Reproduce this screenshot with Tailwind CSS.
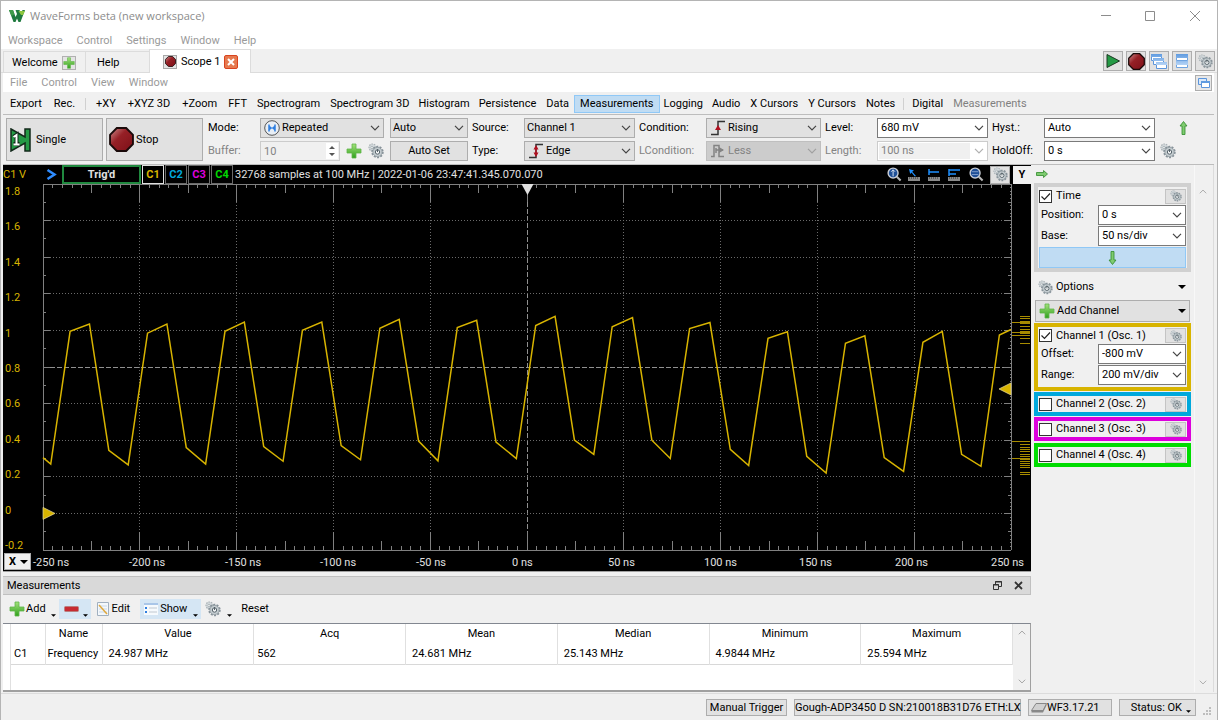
<!DOCTYPE html>
<html lang="en">
<head>
    <meta charset="UTF-8">
    <meta name="viewport" content="width=device-width, initial-scale=1.0">
    <title>WaveForms beta (new workspace)</title>
    <script src="https://cdn.jsdelivr.net/npm/@tailwindcss/browser@4"></script>
</head>
<body class="bg-[#f0f0f0] text-black text-[11px] leading-4 font-['Roboto','Liberation_Sans',sans-serif]">
    <!-- Shared icons -->
    <svg class="absolute w-0 h-0">
        <defs>
            <linearGradient id="g-red" x1="0" y1="0" x2="1" y2="1"><stop offset="0" stop-color="#cf9090"/><stop offset=".4" stop-color="#962026"/><stop offset="1" stop-color="#7d1018"/></linearGradient>
            <linearGradient id="g-green" x1="0" y1="0" x2="0" y2="1"><stop offset="0" stop-color="#a4e27c"/><stop offset="1" stop-color="#2fa01c"/></linearGradient>
            <linearGradient id="g-win" x1="0" y1="0" x2="0" y2="1"><stop offset="0" stop-color="#5f9be0"/><stop offset="1" stop-color="#b5d3f5"/></linearGradient>
        </defs>
        <symbol id="gear" viewBox="0 0 16 16">
            <circle cx="4.500" cy="4.500" r="3.500" fill="#d3d9dc" stroke="#a9b1b5" stroke-width="1.200" stroke-dasharray="1.500 1"/>
            <circle cx="4" cy="4.500" r="1.200" fill="#f4f6f7" stroke="#9aa3a8" stroke-width=".7"/>
            <circle cx="9.500" cy="9" r="5.300" fill="none" stroke="#87929a" stroke-width="1.800" stroke-dasharray="2 1.300"/>
            <circle cx="9.500" cy="9" r="4.600" fill="#c6ced2" stroke="#8a959b" stroke-width=".8"/>
            <circle cx="9.500" cy="9" r="2.200" fill="#f0f2f3" stroke="#56636a"/>
            <path d="M9.500 9V6" stroke="#56636a"/>
        </symbol>
        <symbol id="plus" viewBox="0 0 16 16">
            <path d="M6 1h4v5h5v4h-5v5H6v-5H1V6h5z" fill="url(#g-green)" stroke="#5fb54a" stroke-width=".8"/>
        </symbol>
        <symbol id="stop" viewBox="0 0 24 24">
            <path d="M7.500 1h9L23 7.500v9L16.500 23h-9L1 16.500v-9z" fill="url(#g-red)" stroke="#1a0a0a" stroke-width="1.800"/>
        </symbol>
        <symbol id="chev" viewBox="0 0 10 6"><path d="M1 .8l4 4 4-4" fill="none" stroke="currentColor" stroke-width="1.200"/></symbol>
        <symbol id="tri" viewBox="0 0 8 4"><path d="M0 0h8L4 4z" fill="currentColor"/></symbol>
        <symbol id="arrow" viewBox="0 0 8 14"><path d="M4 .5L7.500 5H5.500v8.500h-3V5H.5z" fill="#7fcb70" stroke="#2f8a2a" stroke-width=".8"/></symbol>
        <symbol id="check" viewBox="0 0 13 13"><path d="M2.500 6.500l3 3 5.500-6" fill="none" stroke="#222" stroke-width="1.200"/></symbol>
        <symbol id="lens" viewBox="0 0 16 16">
            <path d="M10.500 10.500l4 4" stroke="#b9b9b9" stroke-width="2.200"/>
            <circle cx="6.500" cy="6.500" r="5.300" fill="#1f4f96" stroke="#c9ced6" stroke-width="1.500"/>
        </symbol>
        <symbol id="ruler" viewBox="0 0 12 4"><path d="M0 0h12v4H0z" fill="#8a8a8a"/><path d="M1.500 0v2M3.500 0v2M5.500 0v2M7.500 0v2M9.500 0v2" stroke="#4a4a4a" stroke-width=".7"/></symbol>
    </svg>

    <div class="min-h-screen flex flex-col border border-[#b4b4b4]">
        <!-- Title bar -->
        <header class="bg-white">
            <div class="flex items-center h-[30px] pl-2 pr-4 text-[#8c8c8c]">
                <svg class="w-4 h-3 mr-[5px]" viewBox="0 0 16 12">
                    <path d="M0 0h4l2.500 7L8 4l-1.500-4h4l1.500 4 1.500-4H16l-4.500 12H9.500L8 8.500 6.500 12H4.500z" fill="#1f7a3f"/>
                    <path d="M9.500 1H16l-2 4h-2z" fill="#8cc63f"/>
                    <path d="M0 0h4l1.500 4.500-3 1.500z" fill="#3f9b4a"/>
                </svg>
                <h1 class="font-['Open_Sans',sans-serif]">WaveForms beta (new workspace)</h1>
                <div class="ml-auto flex items-center gap-[34px]">
                    <button aria-label="Minimize"><svg class="w-[10px] h-[10px]" viewBox="0 0 10 10"><path d="M0 4.500h10" stroke="#8c8c8c"/></svg></button>
                    <button aria-label="Maximize"><svg class="w-[10px] h-[10px]" viewBox="0 0 10 10"><path d="M.5 .5h9v9H.5z" fill="none" stroke="#8c8c8c"/></svg></button>
                    <button aria-label="Close"><svg class="w-3 h-3" viewBox="0 0 12 12"><path d="M1 1l10 10M11 1L1 11" stroke="#8c8c8c"/></svg></button>
                </div>
            </div>
            <nav class="flex items-center gap-[14px] h-[18px] pl-[7px] pt-px text-[#9a9a9a]">
                <button>Workspace</button><button>Control</button><button>Settings</button><button>Window</button><button>Help</button>
            </nav>
        </header>

        <!-- Instrument tabs -->
        <div class="flex items-end h-[24px] pl-[2px] border-b border-[#dcdcdc]">
            <button class="flex items-center gap-1 h-[21px] w-[83px] pl-2 pt-px border border-b-0 border-[#dcdcdc]">Welcome
                <span class="flex items-center justify-center size-[14px] border border-[#b0b0b0] bg-[#e4e4e4]"><svg class="size-3"><use href="#plus"/></svg></span>
            </button>
            <button class="h-[21px] w-[63px] pl-[11px] pt-px text-left border-t border-[#dcdcdc]">Help</button>
            <button class="flex items-center gap-1 h-[24px] -mb-px w-[102px] pl-[13px] bg-white border border-b-0 border-[#dcdcdc]">
                <span class="flex items-center justify-center size-[14px] border border-[#a8a8a8] bg-[#e4e4e4]"><svg class="size-[11px]"><use href="#stop"/></svg></span>
                Scope 1
                <svg class="size-[14px]" viewBox="0 0 14 14"><rect x=".5" y=".5" width="13" height="13" rx="1.500" fill="#e6794f" stroke="#d9431f"/><path d="M4 4l6 6M10 4l-6 6" stroke="#fff" stroke-width="2"/></svg>
            </button>
            <div class="ml-auto self-center flex gap-[3px] pt-px pr-[2px]">
                <button aria-label="Run all" class="flex items-center justify-center size-5 border border-[#adadad] bg-[#e1e1e1]"><svg class="size-4" viewBox="0 0 16 16"><path d="M2 1.500L14.500 8 2 14.500z" fill="#249a45" stroke="#1b3a22"/></svg></button>
                <button aria-label="Stop all" class="flex items-center justify-center size-5 border border-[#adadad] bg-[#e1e1e1]"><svg class="size-[17px]"><use href="#stop"/></svg></button>
                <button aria-label="Cascade" class="flex items-center justify-center size-5 border border-[#adadad] bg-[#e1e1e1]"><svg class="size-4" viewBox="0 0 16 16"><g fill="#fff" stroke="#5b95dc"><path d="M.5 1.500h10v6H.5z"/><path d="M2.500 5.500h10v6h-10z"/><path d="M5.500 9.500h10v6h-10z"/></g><path d="M0 1h11v3H0zM2 5h11v3H2zM5 9h11v3H5z" fill="url(#g-win)"/></svg></button>
                <button aria-label="Tile" class="flex items-center justify-center size-5 border border-[#adadad] bg-[#e1e1e1]"><svg class="size-4" viewBox="0 0 16 16"><path d="M2.500 1.500h11v6h-11zM2.500 8.500h11v6h-11z" fill="#fff" stroke="#6ea3e0"/><path d="M2 1h12v4H2zM2 8h12v4H2z" fill="url(#g-win)"/></svg></button>
                <button aria-label="Settings" class="flex items-center justify-center size-5 border border-[#adadad] bg-[#e1e1e1]"><svg class="size-[15px]"><use href="#gear"/></svg></button>
            </div>
        </div>

        <div class="flex-1 flex flex-col mx-[2px] mr-[3px]">
            <!-- Scope menu -->
            <nav class="flex items-center gap-[14px] h-[19px] pl-[7px] pr-[2px] pt-px bg-white text-[#9a9a9a]">
                <button>File</button><button>Control</button><button>View</button><button>Window</button>
                <button aria-label="Undock" class="ml-auto flex items-center justify-center w-[17px] h-4 border border-[#adadad] bg-[#e8e8e8]"><svg class="size-3" viewBox="0 0 12 12"><path d="M.5 1.500h8v6h-8z" fill="#dbe9f9" stroke="#5b95dc"/><path d="M3.500 4.500h8v6h-8z" fill="#fff" stroke="#5b95dc"/><path d="M3 4h9v2H3z" fill="#5f9be0"/></svg></button>
            </nav>

            <!-- View toolbar -->
            <div class="flex items-center h-[23px] pt-[2px] pl-px border-b border-[#bdbdbd]">
                <button class="px-[6px]">Export</button>
                <button class="px-[6px]">Rec.</button>
                <span class="w-px h-3 mx-1 bg-[#d0d0d0]"></span>
                <button class="px-[6px]">+XY</button>
                <button class="px-[6px]">+XYZ 3D</button>
                <button class="px-[6px]">+Zoom</button>
                <button class="px-[5px]">FFT</button>
                <button class="px-[5px]">Spectrogram</button>
                <button class="px-[5px]">Spectrogram 3D</button>
                <button class="px-1">Histogram</button>
                <button class="px-[5px]">Persistence</button>
                <button class="px-[5px]">Data</button>
                <button class="px-[5px] h-[18px] border border-[#90c8f6] bg-[#c0dcf3]">Measurements</button>
                <button class="px-1">Logging</button>
                <button class="px-[5px]">Audio</button>
                <button class="px-[5px]">X Cursors</button>
                <button class="px-[5px]">Y Cursors</button>
                <button class="px-[5px]">Notes</button>
                <span class="w-px h-3 mx-[3px] bg-[#d0d0d0]"></span>
                <button class="px-[5px]">Digital</button>
                <button class="px-[5px] text-[#808080]">Measurements</button>
            </div>

            <!-- Acquisition controls -->
            <div class="flex items-center h-[50px] px-[3px] border-b border-[#bdbdbd]">
                <button class="flex items-center gap-1 w-[97px] h-[43px] pl-[3px] border border-[#adadad] bg-[#e1e1e1]">
                    <svg class="w-[22px] h-6" viewBox="0 0 22 24"><path d="M1 1l14 8V1h5v22h-5v-8L1 23z" fill="#249a45" stroke="#12281a" stroke-width="1.500"/><path d="M3.500 9l3-2v9M3.500 16h6" fill="none" stroke="#12281a" stroke-width="4"/><path d="M3.500 9l3-2v9M3.500 16.500h6" fill="none" stroke="#fff" stroke-width="2"/></svg>
                    Single
                </button>
                <button class="flex items-center gap-[2px] w-[97px] h-[43px] ml-[3px] pl-[2px] border border-[#adadad] bg-[#e1e1e1]">
                    <svg class="size-[25px]"><use href="#stop"/></svg>
                    Stop
                </button>
                <div class="grid grid-cols-[52px_124px_84px_56px_111px_71px_115px_56px_111px_56px_111px_auto] gap-y-[3px] items-center ml-[5px]">
                    <label for="mode">Mode:</label>
                    <div class="relative h-5">
                        <select id="mode" class="appearance-none w-full h-full pl-[21px] border border-[#adadad] bg-[#e1e1e1]"><option>Repeated</option></select>
                        <svg class="absolute left-[4px] top-[2px] size-4" viewBox="0 0 16 16"><circle cx="8" cy="8" r="7.300" fill="#e8eef5" stroke="#555"/><path d="M5 4.500v7M11 4.500v7" stroke="#2f7fe0" stroke-width="1.500"/><path d="M5 5.500L8.500 8 5 10.500zM11 5.500L7.500 8l3.500 2.500z" fill="#2f7fe0"/></svg>
                        <svg class="absolute right-1 top-[7px] w-[10px] h-[6px] pointer-events-none text-[#444]"><use href="#chev"/></svg>
                    </div>
                    <div class="relative h-5 ml-[6px]">
                        <select aria-label="Trigger mode" class="appearance-none w-full h-full pl-[2px] border border-[#adadad] bg-[#e1e1e1]"><option>Auto</option></select>
                        <svg class="absolute right-1 top-[7px] w-[10px] h-[6px] pointer-events-none text-[#444]"><use href="#chev"/></svg>
                    </div>
                    <label for="source" class="pl-1">Source:</label>
                    <div class="relative h-5">
                        <select id="source" class="appearance-none w-full h-full pl-[2px] border border-[#adadad] bg-[#e1e1e1]"><option>Channel 1</option></select>
                        <svg class="absolute right-1 top-[7px] w-[10px] h-[6px] pointer-events-none text-[#444]"><use href="#chev"/></svg>
                    </div>
                    <label for="condition" class="pl-1">Condition:</label>
                    <div class="relative h-5">
                        <select id="condition" class="appearance-none w-full h-full pl-[21px] border border-[#adadad] bg-[#e1e1e1]"><option>Rising</option></select>
                        <svg class="absolute left-1 top-[2px] size-4" viewBox="0 0 16 16"><path d="M1 14.500h7v-13h7" fill="none" stroke="#333" stroke-width="1.500"/><path d="M8 5l3 5H5z" fill="#b01020"/></svg>
                        <svg class="absolute right-1 top-[7px] w-[10px] h-[6px] pointer-events-none text-[#444]"><use href="#chev"/></svg>
                    </div>
                    <label for="level" class="pl-1">Level:</label>
                    <div class="relative h-5">
                        <select id="level" class="appearance-none w-full h-full pl-[3px] border border-[#7a7a7a] bg-white"><option>680 mV</option></select>
                        <svg class="absolute right-1 top-[7px] w-[10px] h-[6px] pointer-events-none text-[#444]"><use href="#chev"/></svg>
                    </div>
                    <label for="hyst" class="pl-1">Hyst.:</label>
                    <div class="relative h-5">
                        <select id="hyst" class="appearance-none w-full h-full pl-[3px] border border-[#7a7a7a] bg-white"><option>Auto</option></select>
                        <svg class="absolute right-1 top-[7px] w-[10px] h-[6px] pointer-events-none text-[#444]"><use href="#chev"/></svg>
                    </div>
                    <button aria-label="Collapse" class="ml-6"><svg class="w-[9px] h-[14px]"><use href="#arrow"/></svg></button>

                    <label for="buffer" class="text-[#838383]">Buffer:</label>
                    <div class="flex items-center justify-between h-5">
                        <div class="relative h-5 w-20">
                            <input id="buffer" value="10" disabled class="w-full h-full pl-[3px] border border-[#cccccc] text-[#838383]">
                            <svg class="absolute right-[2px] top-[2px] w-3 h-4" viewBox="0 0 12 16"><path d="M0 0h12v16H0z" fill="#fff"/><path d="M3 6l3-3 3 3zM3 10l3 3 3-3z" fill="#555"/></svg>
                        </div>
                        <button aria-label="Add buffer"><svg class="size-4"><use href="#plus"/></svg></button>
                        <button aria-label="Buffer options"><svg class="size-4"><use href="#gear"/></svg></button>
                    </div>
                    <button class="h-5 ml-[6px] border border-[#adadad] bg-[#e1e1e1]">Auto Set</button>
                    <label for="type" class="pl-1">Type:</label>
                    <div class="relative h-5">
                        <select id="type" class="appearance-none w-full h-full pl-[21px] border border-[#adadad] bg-[#e1e1e1]"><option>Edge</option></select>
                        <svg class="absolute left-1 top-[2px] size-4" viewBox="0 0 16 16"><path d="M1 14.500h7v-13h7" fill="none" stroke="#333" stroke-width="1.500"/><path d="M8 2l2.500 4.500h-5zM8 14L5.500 9.500h5z" fill="#b01020"/><path d="M8 5v6" stroke="#b01020" stroke-width="1.500"/></svg>
                        <svg class="absolute right-1 top-[7px] w-[10px] h-[6px] pointer-events-none text-[#444]"><use href="#chev"/></svg>
                    </div>
                    <label for="lcondition" class="pl-1 text-[#838383]">LCondition:</label>
                    <div class="relative h-5">
                        <select id="lcondition" disabled class="appearance-none w-full h-full pl-[21px] border border-[#bfbfbf] bg-[#cccccc] text-[#838383] opacity-100"><option>Less</option></select>
                        <svg class="absolute left-1 top-[2px] size-4" viewBox="0 0 16 16"><path d="M1 13.500h3v-11h5v11h5M6 7h7M6 5v5" fill="none" stroke="#838383" stroke-width="1.500"/><path d="M9 4l5 3-5 3z" fill="#838383"/></svg>
                        <svg class="absolute right-1 top-[7px] w-[10px] h-[6px] pointer-events-none text-[#a0a0a0]"><use href="#chev"/></svg>
                    </div>
                    <label for="length" class="pl-1 text-[#838383]">Length:</label>
                    <div class="relative h-5">
                        <select id="length" disabled class="appearance-none w-full h-full pl-[2px] border-2 border-r-[18px] border-white outline outline-[#cccccc] -outline-offset-1 bg-[#f0f0f0] text-[#838383] opacity-100"><option>100 ns</option></select>
                        <svg class="absolute right-1 top-[7px] w-[10px] h-[6px] pointer-events-none text-[#b0b0b0]"><use href="#chev"/></svg>
                    </div>
                    <label for="holdoff" class="pl-1">HoldOff:</label>
                    <div class="relative h-5">
                        <select id="holdoff" class="appearance-none w-full h-full pl-[3px] border border-[#7a7a7a] bg-white"><option>0 s</option></select>
                        <svg class="absolute right-1 top-[7px] w-[10px] h-[6px] pointer-events-none text-[#444]"><use href="#chev"/></svg>
                    </div>
                    <button aria-label="Trigger options" class="ml-[5px]"><svg class="size-4"><use href="#gear"/></svg></button>
                </div>
            </div>

            <div class="flex-1 flex">
                <main class="flex-1 min-w-0 flex flex-col">
                    <!-- Scope screen -->
                    <section class="bg-black border-b border-[#a0a0a0] text-[#e0e0e0]">
                        <div class="flex items-center h-[19px]">
                            <span class="w-[43px] text-[#d8b400]">C1 V</span>
                            <svg class="w-[11px] h-[11px] mr-[5px]" viewBox="0 0 10 11"><path d="M1 1l7 4.500L1 10" fill="none" stroke="#2f8cff" stroke-width="2.500"/></svg>
                            <span class="w-[79px] h-[19px] border-2 border-[#20893f] text-center font-bold">Trig'd</span>
                            <button class="w-[22px] h-[19px] ml-px border border-[#e0e0e0] font-bold text-[#d8b400]">C1</button>
                            <button class="w-[22px] h-[19px] ml-px border border-[#6a6a6a] font-bold text-[#00a8dc]">C2</button>
                            <button class="w-[22px] h-[19px] ml-px border border-[#6a6a6a] font-bold text-[#dc00dc]">C3</button>
                            <button class="w-[22px] h-[19px] ml-px border border-[#6a6a6a] font-bold text-[#00d800]">C4</button>
                            <span class="ml-[2px]">32768 samples at 100 MHz | 2022-01-06 23:47:41.345.070.070</span>
                            <div class="ml-auto flex items-center gap-[6px]">
                                <button aria-label="Zoom to 1"><svg class="size-[15px]" viewBox="0 0 16 16"><use href="#lens"/><path d="M6.500 3v7M4.500 5l2-2 2 2" stroke="#dfe8f4" fill="none"/></svg></button>
                                <button aria-label="Pointer"><svg class="w-3 h-3" viewBox="0 0 12 12"><use href="#ruler" y="8" width="12" height="4"/><path d="M1 0l5 1.500-1.800 1.200L8 7 6.800 7.500 3.500 3.500 2.200 5z" fill="#1e90ff"/></svg></button>
                                <button aria-label="Horizontal cursor" class="ml-[2px]"><svg class="w-3 h-3" viewBox="0 0 12 12"><use href="#ruler" y="8" width="12" height="4"/><path d="M1 0v6M1 3h10" stroke="#1e90ff" stroke-width="1.500"/></svg></button>
                                <button aria-label="Vertical cursor" class="ml-[2px]"><svg class="w-3 h-3" viewBox="0 0 12 12"><use href="#ruler" y="8" width="12" height="4"/><path d="M1 0v7M1 1h11M1 5h7" stroke="#1e90ff" stroke-width="1.500"/></svg></button>
                                <button aria-label="Fit" class="ml-[3px]"><svg class="size-[15px]" viewBox="0 0 16 16"><use href="#lens"/><path d="M3 5h7M3 8h7" stroke="#7f9ccc"/></svg></button>
                                <button aria-label="Plot options" class="flex items-center justify-center w-5 h-[18px] border border-[#adadad] bg-[#e1e1e1]"><svg class="size-[15px]"><use href="#gear"/></svg></button>
                                <button class="w-[18px] h-[18px] -ml-[3px] bg-[#f0f0f0] text-black font-bold">Y</button>
                            </div>
                        </div>
                        <div id="screen" class="relative">
                            <svg id="plot" class="block w-full h-[387px]"></svg>
                            <button aria-label="X axis menu" class="absolute left-px bottom-px flex items-center gap-1 w-[27px] h-[17px] pl-1 bg-[#f0f0f0] border border-[#adadad] text-black font-bold">X
                                <svg class="w-2 h-1"><use href="#tri"/></svg>
                            </button>
                        </div>
                    </section>

                    <!-- Measurements dock -->
                    <section class="mt-1 flex-1 flex flex-col">
                        <div class="flex items-center h-[19px] pl-1 pr-[7px] border border-l-0 border-[#c0c0c0] bg-[#d9d9d9]">
                            <h2>Measurements</h2>
                            <button aria-label="Float" class="ml-auto mr-3"><svg class="size-[9px]" viewBox="0 0 9 9"><path d="M2.500 3V.5h6v5H6M.5 3.500h5v5h-5z" fill="none" stroke="#333"/><path d="M2 1h7M0 4h6" stroke="#333"/></svg></button>
                            <button aria-label="Close"><svg class="size-[9px]" viewBox="0 0 9 9"><path d="M1 1l7 7M8 1L1 8" stroke="#333" stroke-width="1.800"/></svg></button>
                        </div>
                        <div class="flex items-center h-[28px] pl-[6px]">
                            <button class="flex items-center"><svg class="size-4 mr-px"><use href="#plus"/></svg>Add<svg class="w-[5px] h-[3px] mt-3 ml-[5px]"><use href="#tri"/></svg></button>
                            <button aria-label="Remove" class="flex items-center w-8 h-5 ml-[3px] pl-[5px] bg-[#d5e6f4]"><svg class="w-[15px] h-[6px]" viewBox="0 0 15 6"><rect x=".5" y=".5" width="14" height="5" rx="1" fill="#c72b32" stroke="#b98080"/></svg><svg class="w-[5px] h-[3px] mt-3 ml-1"><use href="#tri"/></svg></button>
                            <button class="flex items-center gap-[3px] ml-[6px]"><svg class="w-3 h-4" viewBox="0 0 12 16"><path d="M.5 1.500h11v13H.5z" fill="#f4f8fc" stroke="#a0b0c0"/><path d="M2 5h8M2 8h8M2 11h8" stroke="#c8d8e8"/><path d="M2 4l8 9" stroke="#e0a83c" stroke-width="1.500"/></svg>Edit</button>
                            <button class="flex items-center w-[61px] h-5 ml-[10px] pl-1 bg-[#d5e6f4]"><svg class="size-[14px] mr-[2px]" viewBox="0 0 14 14"><path d="M0 1h14v12H0z" fill="#f6fafd"/><path d="M0 1h14v2H0z" fill="#a9c6e8"/><path d="M1 6h2M1 10h2" stroke="#2f7fe0" stroke-width="2"/><path d="M5 6h8M5 10h8" stroke="#c0c8d0"/></svg>Show<svg class="w-[5px] h-[3px] mt-3 ml-[6px]"><use href="#tri"/></svg></button>
                            <button aria-label="Options" class="flex items-center ml-1"><svg class="size-4"><use href="#gear"/></svg><svg class="w-[5px] h-[3px] mt-3 ml-[6px]"><use href="#tri"/></svg></button>
                            <button class="ml-[9px]">Reset</button>
                        </div>
                        <div class="flex h-[69px] border border-t-[#828790] border-b-2 border-[#a0a0a0] border-l-0 bg-white">
                            <div class="w-2 border-r border-[#e0e0e0]"></div>
                            <div class="flex-1">
                                <table class="w-full table-fixed border-collapse border-b border-[#d8d8d8]">
                                    <colgroup><col class="w-[34px]"><col class="w-[57px]"><col><col><col><col><col><col></colgroup>
                                    <thead>
                                        <tr class="h-5 *:font-normal *:border-r *:border-[#e0e0e0]"><th></th><th>Name</th><th>Value</th><th>Acq</th><th>Mean</th><th>Median</th><th>Minimum</th><th>Maximum</th></tr>
                                    </thead>
                                    <tbody>
                                        <tr class="h-5 *:pl-[6px] *:border-r *:border-[#e0e0e0]"><td class="pl-[3px]!">C1</td><td class="pl-[2px]!">Frequency</td><td>24.987 MHz</td><td class="pl-[3px]!">562</td><td>24.681 MHz</td><td>25.143 MHz</td><td>4.9844 MHz</td><td>25.594 MHz</td></tr>
                                    </tbody>
                                </table>
                            </div>
                            <div class="flex flex-col items-center justify-between w-[17px] py-[6px] bg-[#f0f0f0] text-[#a0a0a0]">
                                <svg class="w-2 h-[5px] rotate-180"><use href="#chev" width="8" height="5"/></svg>
                                <svg class="w-2 h-[5px]"><use href="#chev" width="8" height="5"/></svg>
                            </div>
                        </div>
                    </section>
                </main>

                <!-- Channel panel -->
                <aside class="flex w-[183px] border-r border-[#dcdcdc]">
                    <div class="w-[157px] ml-[3px]">
                        <button aria-label="Hide panel" class="flex items-center h-[18px] pl-[2px]"><svg class="w-3 h-2" viewBox="0 0 12 8"><path d="M.5 2.500h7v-2L11.500 4l-4 3.500v-2h-7z" fill="#7fcb70" stroke="#2f8a2a" stroke-width=".8"/></svg></button>
                        <fieldset class="border-4 border-[#d0d0d0] px-px pt-px">
                            <div class="flex items-center h-[16px]">
                                <span class="relative size-[13px]">
                                    <input id="time" type="checkbox" checked class="block appearance-none size-full border border-[#333] bg-white">
                                    <svg class="absolute inset-0 size-[13px] pointer-events-none"><use href="#check"/></svg>
                                </span>
                                <label for="time" class="ml-1">Time</label>
                                <button aria-label="Time options" class="ml-auto flex items-center justify-center w-[21px] h-[15px] border border-[#c4c4c4] bg-[#e1e1e1]"><svg class="size-3"><use href="#gear"/></svg></button>
                            </div>
                            <div class="grid grid-cols-[59px_1fr] gap-y-px items-center pt-px">
                                <label for="position" class="pl-[2px]">Position:</label>
                                <div class="relative h-5">
                                    <select id="position" class="appearance-none w-full h-full pl-[3px] border border-[#7a7a7a] bg-white"><option>0 s</option></select>
                                    <svg class="absolute right-1 top-[7px] w-[10px] h-[6px] pointer-events-none text-[#444]"><use href="#chev"/></svg>
                                </div>
                                <label for="base" class="pl-[2px]">Base:</label>
                                <div class="relative h-5">
                                    <select id="base" class="appearance-none w-full h-full pl-[3px] border border-[#7a7a7a] bg-white"><option>50 ns/div</option></select>
                                    <svg class="absolute right-1 top-[7px] w-[10px] h-[6px] pointer-events-none text-[#444]"><use href="#chev"/></svg>
                                </div>
                            </div>
                            <button aria-label="More time settings" class="flex items-center justify-center w-full h-[21px] mt-px border border-[#90c8f6] bg-[#c0dcf3]"><svg class="w-[9px] h-[14px] rotate-180"><use href="#arrow"/></svg></button>
                        </fieldset>
                        <button class="flex items-center w-full h-[22px] mt-1 px-1"><svg class="size-[15px] mr-[3px]"><use href="#gear"/></svg>Options<svg class="w-2 h-1 ml-auto mr-px"><use href="#tri"/></svg></button>
                        <button class="flex items-center w-[155px] h-[22px] mt-[2px] ml-px px-[3px] border border-[#adadad] bg-[#e1e1e1]"><svg class="size-4 mr-[2px]"><use href="#plus"/></svg>Add Channel<svg class="w-2 h-1 ml-auto"><use href="#tri"/></svg></button>
                        <fieldset class="mt-px border-4 border-[#d8b400] px-px pb-[2px]">
                            <div class="flex items-center h-[17px]">
                                <span class="relative size-[13px]">
                                    <input id="ch1" type="checkbox" checked class="block appearance-none size-full border border-[#333] bg-white">
                                    <svg class="absolute inset-0 size-[13px] pointer-events-none"><use href="#check"/></svg>
                                </span>
                                <label for="ch1" class="ml-1">Channel 1 (Osc. 1)</label>
                                <button aria-label="Channel 1 options" class="ml-auto flex items-center justify-center w-[21px] h-[15px] border border-[#c4c4c4] bg-[#e1e1e1]"><svg class="size-3"><use href="#gear"/></svg></button>
                            </div>
                            <div class="grid grid-cols-[59px_1fr] gap-y-px items-center">
                                <label for="offset" class="pl-[2px]">Offset:</label>
                                <div class="relative h-5">
                                    <select id="offset" class="appearance-none w-full h-full pl-[3px] border border-[#7a7a7a] bg-white"><option>-800 mV</option></select>
                                    <svg class="absolute right-1 top-[7px] w-[10px] h-[6px] pointer-events-none text-[#444]"><use href="#chev"/></svg>
                                </div>
                                <label for="range" class="pl-[2px]">Range:</label>
                                <div class="relative h-5">
                                    <select id="range" class="appearance-none w-full h-full pl-[3px] border border-[#7a7a7a] bg-white"><option>200 mV/div</option></select>
                                    <svg class="absolute right-1 top-[7px] w-[10px] h-[6px] pointer-events-none text-[#444]"><use href="#chev"/></svg>
                                </div>
                            </div>
                        </fieldset>
                        <div class="flex items-center h-6 mt-px border-4 border-[#00a8dc] px-px">
                            <input id="ch2" type="checkbox" class="appearance-none size-[13px] border border-[#333] bg-white">
                            <label for="ch2" class="ml-1">Channel 2 (Osc. 2)</label>
                            <button aria-label="Channel 2 options" class="ml-auto flex items-center justify-center w-[21px] h-[15px] border border-[#c4c4c4] bg-[#e1e1e1]"><svg class="size-3"><use href="#gear"/></svg></button>
                        </div>
                        <div class="flex items-center h-6 mt-px border-4 border-[#dc00dc] px-px">
                            <input id="ch3" type="checkbox" class="appearance-none size-[13px] border border-[#333] bg-white">
                            <label for="ch3" class="ml-1">Channel 3 (Osc. 3)</label>
                            <button aria-label="Channel 3 options" class="ml-auto flex items-center justify-center w-[21px] h-[15px] border border-[#c4c4c4] bg-[#e1e1e1]"><svg class="size-3"><use href="#gear"/></svg></button>
                        </div>
                        <div class="flex items-center h-6 mt-[2px] border-4 border-[#00dc00] px-px">
                            <input id="ch4" type="checkbox" class="appearance-none size-[13px] border border-[#333] bg-white">
                            <label for="ch4" class="ml-1">Channel 4 (Osc. 4)</label>
                            <button aria-label="Channel 4 options" class="ml-auto flex items-center justify-center w-[21px] h-[15px] border border-[#c4c4c4] bg-[#e1e1e1]"><svg class="size-3"><use href="#gear"/></svg></button>
                        </div>
                    </div>
                    <div class="flex flex-col items-center justify-between w-[17px] ml-[3px] pt-6 pb-[7px] border-l border-[#f8f8f8] text-[#a8a8a8]">
                        <svg class="w-2 h-[5px] rotate-180"><use href="#chev" width="8" height="5"/></svg>
                        <svg class="w-2 h-[5px]"><use href="#chev" width="8" height="5"/></svg>
                    </div>
                </aside>
            </div>
        </div>

        <!-- Status bar -->
        <footer class="flex items-center justify-end gap-[7px] h-[27px] mt-px pr-[5px] border-t border-[#dcdcdc]">
            <button class="w-[81px] h-[17px] leading-4 border border-[#adadad] bg-[#e1e1e1]">Manual Trigger</button>
            <button class="w-[227px] h-[17px] leading-4 border border-[#adadad] bg-[#e1e1e1] whitespace-nowrap">Gough-ADP3450 D SN:210018B31D76 ETH:LX</button>
            <button class="flex items-center w-[84px] h-[17px] pl-[2px] pt-px border border-[#adadad] bg-[#e1e1e1]"><svg class="w-4 h-[10px]" viewBox="0 0 16 10"><path d="M5 .5h10.500L12 7.500H.5z" fill="#d0d0d0" stroke="#888"/><path d="M.5 7.500v2H12l3.500-7v-2L12 7.500z" fill="#888"/></svg>WF3.17.21</button>
            <button class="flex items-center justify-end w-[77px] h-[17px] pr-1 pt-px border border-[#adadad] bg-[#e1e1e1]">Status: OK<svg class="w-[5px] h-[3px] mt-2 ml-1"><use href="#tri"/></svg></button>
            <svg class="size-[9px] self-end mb-1" viewBox="0 0 9 9"><path d="M6 0h2v2H6zM3 3h2v2H3zM6 3h2v2H6zM0 6h2v2H0zM3 6h2v2H3zM6 6h2v2H6z" fill="#bdbdbd"/></svg>
        </footer>
    </div>

    <script>
        // Trace points: [time in ns, volts]
        const trace = [
            [-250, 0.305], [-246, 0.27], [-236, 0.995], [-226, 1.035], [-216, 0.345], [-206, 0.265],
            [-196, 0.985], [-186, 1.035], [-176, 0.36], [-166, 0.27], [-156, 0.995], [-146, 1.045],
            [-136, 0.365], [-126, 0.285], [-116, 1.0], [-106, 1.045], [-96, 0.37], [-86, 0.293],
            [-76, 1.012], [-66, 1.06], [-56, 0.395], [-46, 0.287], [-36, 1.015], [-26, 1.055],
            [-16, 0.39], [-5.5, 0.3], [4.5, 1.027], [14.5, 1.077], [24.5, 0.4], [34.5, 0.322],
            [44, 1.02], [54.5, 1.07], [64.5, 0.4], [74, 0.3], [84, 1.01], [94.5, 1.043],
            [105, 0.35], [114.5, 0.262], [124.5, 0.957], [134.5, 0.993], [144.5, 0.312], [154.5, 0.22],
            [164.5, 0.93], [174.5, 0.97], [184.5, 0.305], [194.5, 0.23], [204.5, 0.935], [214.5, 0.995],
            [224.5, 0.323], [234.5, 0.257], [244, 0.975], [250, 1.005]
        ];
        const screenBox = document.getElementById('screen');
        const svg = document.getElementById('plot');

        const draw = () => {
            const left = 40, right = screenBox.clientWidth - 20, top = 0, bottom = 366;
            const px = t => left + (t + 250) / 500 * (right - left);
            const py = v => top + (1.8 - v) / 2 * (bottom - top);
            const snap = n => Math.floor(n) + 0.5;
            let out = '';
            const line = (x1, y1, x2, y2, extra = '') => {
                out += `<line x1="${x1}" y1="${y1}" x2="${x2}" y2="${y2}" ${extra}/>`;
            };

            out += '<g stroke="#808080">';
            for (let i = 1; i < 100; i++) {
                const x = snap(px(-250 + i * 5));
                const len = i % 10 === 0 ? 18 : i % 5 === 0 ? 9 : 4;
                line(x, top, x, top + len);
                line(x, bottom - len, x, bottom);
                if (i % 10 === 0) {
                    line(x, top + 18, x, bottom - 18, i === 50 ? 'stroke="#909090" stroke-dasharray="5 2"' : 'stroke="#6a6a6a" stroke-dasharray="1 2"');
                }
            }
            for (let i = 0; i <= 100; i++) {
                const y = snap(py(1.8 - i * 0.02));
                const len = i % 10 === 0 ? 7 : i % 5 === 0 ? 3 : 1;
                line(left, y, left + len, y);
                line(right - len, y, right, y);
                if (i % 10 === 0 && i > 0 && i < 100) {
                    line(left + 7, y, right - 7, y, i === 50 ? 'stroke="#909090" stroke-dasharray="5 2"' : 'stroke="#6a6a6a" stroke-dasharray="1 2"');
                }
            }
            line(left, 0.5, right, 0.5);
            line(left, bottom + 0.5, right, bottom + 0.5);
            line(left + 0.5, top, left + 0.5, bottom);
            line(right + 0.5, top, right + 0.5, bottom);
            out += '</g>';

            // Axis labels
            for (let i = 0; i <= 10; i++) {
                const volts = Math.round(18 - i * 2) / 10;
                out += `<text x="2" y="${Math.round(11 + i * 35.4)}" fill="#d8b400">${volts}</text>`;
                out += `<text x="${Math.round(30 + i * (right - left - 10) / 10)}" y="382" fill="#e0e0e0">${-250 + i * 50} ns</text>`;
            }

            out += `<polyline fill="none" stroke="#d8b400" stroke-width="1.5" points="${trace.map(([t, v]) => px(t) + ',' + py(v)).join(' ')}"/>`;

            // Level density marks beside the right axis
            out += '<g stroke="#a88c00">';
            [132, 134, 137, 139, 142, 145, 147, 149, 151, 154, 159, 257, 260, 263, 265, 267, 270, 272, 275, 277, 279, 281, 283, 288, 290].forEach(y => line(right + 9, y + 0.5, right + 19, y + 0.5));
            [138, 148, 151, 257, 274].forEach(y => line(right + 1, y + 0.5, right + 19, y + 0.5));
            out += '</g>';

            // Trigger time, channel zero and trigger level markers
            const mid = snap(px(0));
            out += `<path d="M${mid - 6} 0h12l-6 11z" fill="#e0e0e0"/>`;
            out += `<path d="M${left} ${py(0) - 6}l12 6-12 6z" fill="#d8b400" stroke="#e8dca0" stroke-width=".7"/>`;
            out += `<path d="M${right} ${py(0.68) - 6}l-12 6 12 6z" fill="#d8b400" stroke="#e8dca0" stroke-width=".7"/>`;
            svg.innerHTML = out;
        };

        new ResizeObserver(draw).observe(screenBox);
        draw();
    </script>
</body>
</html>
